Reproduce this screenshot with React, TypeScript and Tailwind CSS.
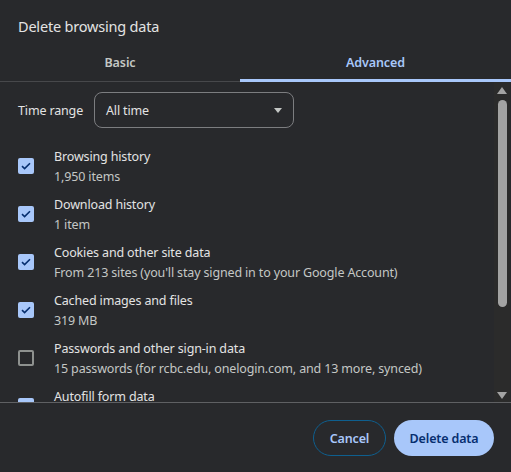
import React from "react";

const items = [
  { label: "Browsing history", sub: "1,950 items", checked: true },
  { label: "Download history", sub: "1 item", checked: true },
  { label: "Cookies and other site data", sub: "From 213 sites (you'll stay signed in to your Google Account)", checked: true },
  { label: "Cached images and files", sub: "319 MB", checked: true },
  { label: "Passwords and other sign-in data", sub: "15 passwords (for rcbc.edu, onelogin.com, and 13 more, synced)", checked: false },
  { label: "Autofill form data", sub: "Addresses and more", checked: true },
];

function Check({ checked }: { checked: boolean }) {
  if (!checked)
    return <div className="w-[16px] h-[16px] rounded-[2px] border-2 border-[#8e918f] shrink-0" />;
  return (
    <div className="w-[16px] h-[16px] rounded-[2px] bg-[#a8c7fa] flex items-center justify-center shrink-0">
      <svg width="10" height="8" viewBox="0 0 10 8" fill="none">
        <path d="M1 4.2 L3.6 6.6 L9 1.2" stroke="#062e6f" strokeWidth="1.6" />
      </svg>
    </div>
  );
}

export default function App() {
  return (
    <div
      className="w-[511px] h-[472px] bg-[#28292c] flex flex-col overflow-hidden text-[#e3e3e3]"
      style={{ fontFamily: '"Noto Sans", "Open Sans", sans-serif' }}
    >
      <div className="h-[44px] pl-[18px] flex items-center pt-[10px] text-[14.5px] tracking-[-0.2px]">Delete browsing data</div>
      <div className="h-[38px] flex border-b border-[#47484b] text-[12.5px] tracking-[-0.1px] font-semibold">
        <div className="w-[240px] flex items-center justify-center text-[#c4c7c5] pt-[2px]">Basic</div>
        <div className="flex-1 flex items-center justify-center text-[#a8c7fa] border-b-[3px] border-[#a8c7fa] pt-[4px] mb-[-1px]">
          Advanced
        </div>
      </div>
      <div className="h-[321px] flex border-b border-[#5f6063] overflow-hidden">
        <div className="flex-1 pl-[18px] pt-[10px] overflow-hidden text-[12.5px] tracking-[-0.15px]">
          <div className="flex items-center h-[36px]">
            <span className="w-[76px] pt-[2px]">Time range</span>
            <div className="w-[200px] h-[36px] border border-[#7c7d80] rounded-[8px] flex items-center justify-between pl-[11px] pr-[11px]">
              <span className="pt-[2px]">All time</span>
              <svg width="8" height="5" viewBox="0 0 8 5">
                <path d="M0 0 L8 0 L4 5 Z" fill="#c4c7c5" />
              </svg>
            </div>
          </div>
          <div className="pt-[14px]">
            {items.map((it) => (
              <div key={it.label} className="h-[48px] flex items-center">
                <Check checked={it.checked} />
                <div className="pl-[20px] pt-[2px] flex flex-col leading-[20px] whitespace-nowrap">
                  <span className="text-[#e3e3e3]">{it.label}</span>
                  <span className="text-[#c4c7c5]">{it.sub}</span>
                </div>
              </div>
            ))}
          </div>
        </div>
        <div className="w-[16px] bg-[#2b2b2b] flex flex-col items-center pt-[5px] pb-[3px] mr-[1px]">
          <svg width="10" height="7" viewBox="0 0 10 7">
            <path d="M5 0 L10 7 L0 7 Z" fill="#a3a3a3" />
          </svg>
          <div className="w-[9px] h-[207px] bg-[#a3a3a3] rounded-full mt-[6px]" />
          <div className="flex-1" />
          <svg width="10" height="7" viewBox="0 0 10 7">
            <path d="M0 0 L10 0 L5 7 Z" fill="#a3a3a3" />
          </svg>
        </div>
      </div>
      <div className="flex justify-end gap-[8px] pr-[17px] pt-[17px] text-[12.5px] tracking-[-0.15px] font-semibold">
        <button className="w-[73px] h-[36px] rounded-full border border-[#0e5f8f] text-[#a8c7fa] pt-[2px]">Cancel</button>
        <button className="w-[100px] h-[36px] rounded-full bg-[#a8c7fa] text-[#062e6f] pt-[2px]">Delete data</button>
      </div>
    </div>
  );
}
